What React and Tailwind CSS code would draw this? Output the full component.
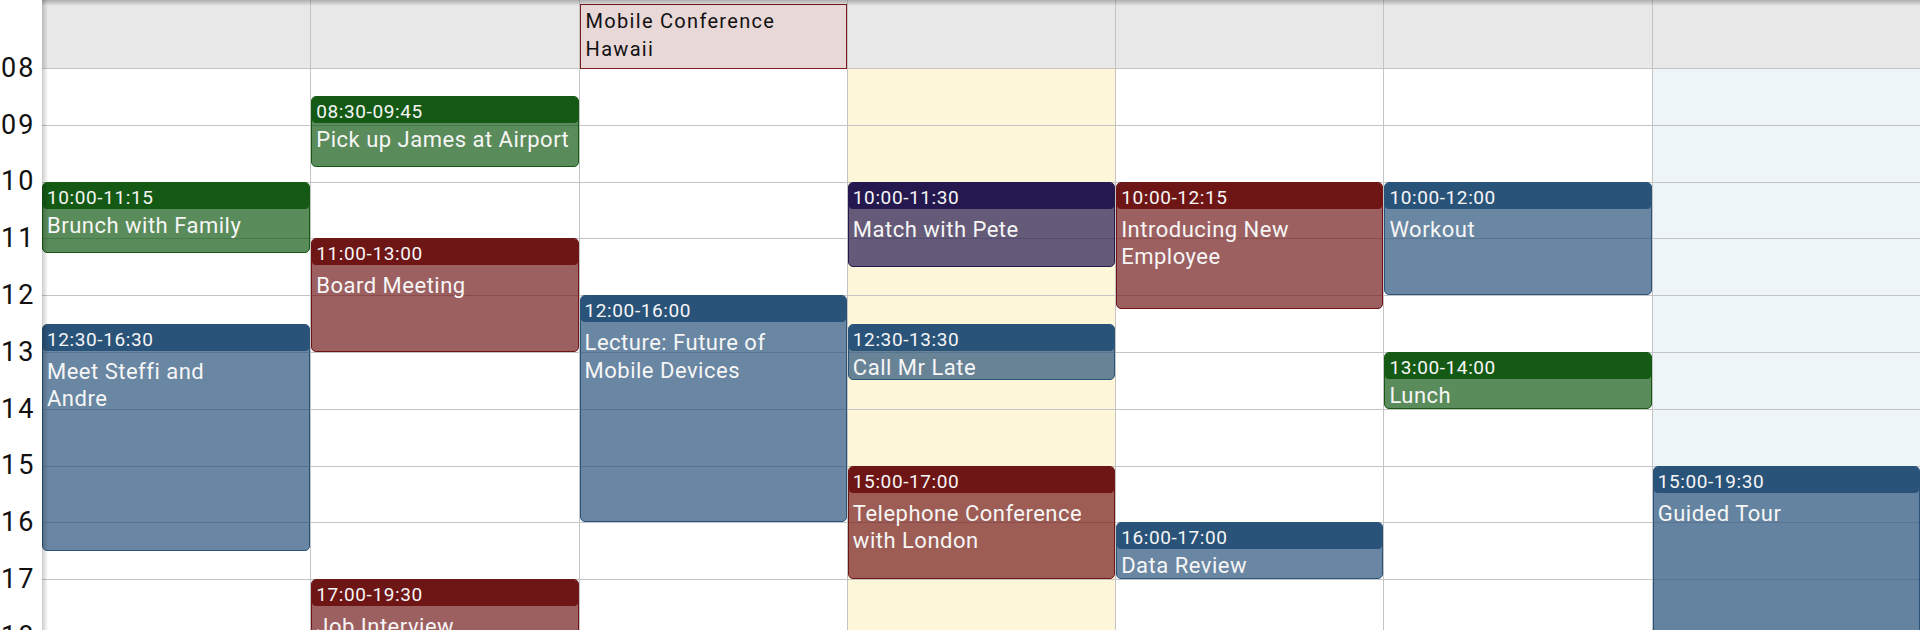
import React from "react";

const HOUR = 56.8;
const hours = ["08", "09", "10", "11", "12", "13", "14", "15", "16", "17", "18"];

const palette = {
  green: { head: "bg-[#145a14]", body: "bg-[#145a14b3]", border: "border-[#145a14]" },
  red: { head: "bg-[#6e1516]", body: "bg-[#6e1516ad]", border: "border-[#6e1516]" },
  blue: { head: "bg-[#2a537a]", body: "bg-[#2a537ab3]", border: "border-[#2a537a]" },
  purple: { head: "bg-[#24184f]", body: "bg-[#24184fb3]", border: "border-[#24184f]" },
};

const columns = [
  {
    bg: "bg-white",
    events: [
      { start: 10, end: 11.25, time: "10:00-11:15", title: ["Brunch with Family"], color: "green" },
      { start: 12.5, end: 16.5, time: "12:30-16:30", title: ["Meet Steffi and", "Andre"], color: "blue" },
    ],
  },
  {
    bg: "bg-white",
    events: [
      { start: 8.5, end: 9.75, time: "08:30-09:45", title: ["Pick up James at Airport"], color: "green" },
      { start: 11, end: 13, time: "11:00-13:00", title: ["Board Meeting"], color: "red" },
      { start: 17, end: 19.5, time: "17:00-19:30", title: ["Job Interview"], color: "red" },
    ],
  },
  {
    bg: "bg-white",
    allDay: ["Mobile Conference", "Hawaii"],
    events: [
      { start: 12, end: 16, time: "12:00-16:00", title: ["Lecture: Future of", "Mobile Devices"], color: "blue" },
    ],
  },
  {
    bg: "bg-[#fdf6d8]",
    events: [
      { start: 10, end: 11.5, time: "10:00-11:30", title: ["Match with Pete"], color: "purple" },
      { start: 12.5, end: 13.5, time: "12:30-13:30", title: ["Call Mr Late"], color: "blue" },
      { start: 15, end: 17, time: "15:00-17:00", title: ["Telephone Conference", "with London"], color: "red" },
    ],
  },
  {
    bg: "bg-white",
    events: [
      { start: 10, end: 12.25, time: "10:00-12:15", title: ["Introducing New", "Employee"], color: "red" },
      { start: 16, end: 17, time: "16:00-17:00", title: ["Data Review"], color: "blue" },
    ],
  },
  {
    bg: "bg-white",
    events: [
      { start: 10, end: 12, time: "10:00-12:00", title: ["Workout"], color: "blue" },
      { start: 13, end: 14, time: "13:00-14:00", title: ["Lunch"], color: "green" },
    ],
  },
  {
    bg: "bg-[#eef5f8]",
    events: [
      { start: 15, end: 19.5, time: "15:00-19:30", title: ["Guided Tour"], color: "blue" },
    ],
  },
];

function EventCard({ ev }) {
  const c = palette[ev.color];
  const top = (ev.start - 8) * HOUR - 1;
  const height = (ev.end - ev.start) * HOUR;
  const tall = height >= 80;

  return (
    <div
      className={`absolute left-0 right-0 overflow-hidden rounded-[5px] border text-[#f6f6f6] ${c.border} ${c.body}`}
      style={{ top, height }}
    >
      <div className={`h-[26px] rounded-[4px] pl-[4px] pt-[2px] text-[19px] leading-[26px] tracking-[0.6px] ${c.head}`}>
        {ev.time}
      </div>
      <div className={`whitespace-nowrap pl-[4px] pr-[4px] text-[22px] leading-[27.5px] tracking-[0.5px] ${tall ? "pt-[7px]" : "pt-[3px]"}`}>
        {ev.title.map((line) => (
          <div key={line}>{line}</div>
        ))}
      </div>
    </div>
  );
}

export default function App() {
  return (
    <div className="flex h-[630px] w-[1920px] overflow-hidden bg-white font-['Roboto',sans-serif]">
      {/* Hour gutter */}
      <div className="flex w-[42px] shrink-0 flex-col">
        <div className="h-[39.6px] shrink-0" />
        {hours.map((h) => (
          <div key={h} className="flex h-[56.8px] shrink-0 items-center pl-[1px] text-[27px] tracking-[2px] text-[#111]">
            {h}
          </div>
        ))}
      </div>

      {/* Week grid */}
      <div className="relative grid flex-1 grid-cols-7">
        {columns.map((col, i) => (
          <div key={i} className={`flex flex-col ${i > 0 ? "border-l border-[#c4c4c4]" : ""}`}>
            <div className="h-[69px] shrink-0 border-b border-[#c4c4c4] bg-[#e8e8e8] pt-[4px]">
              {col.allDay && (
                <div className="h-[65px] border border-[#7d1c1c] bg-[#e8d8d8] pl-[5px] pt-[3px] text-[20px] leading-[27.5px] tracking-[1.3px] text-[#111]">
                  {col.allDay.map((line) => (
                    <div key={line}>{line}</div>
                  ))}
                </div>
              )}
            </div>
            <div className={`relative flex-1 ${col.bg}`}>
              {hours.map((h) => (
                <div key={h} className="h-[56.8px] border-b border-[#c4c4c4]" />
              ))}
              {col.events.map((ev) => (
                <EventCard key={ev.time + ev.title[0]} ev={ev} />
              ))}
            </div>
          </div>
        ))}

        {/* inset shading along the top and left edges */}
        <div className="pointer-events-none absolute inset-x-0 top-0 h-[6px] bg-linear-to-b from-black/25 to-transparent" />
        <div className="pointer-events-none absolute inset-y-0 left-0 w-[6px] bg-linear-to-r from-black/20 to-transparent" />
      </div>
    </div>
  );
}
